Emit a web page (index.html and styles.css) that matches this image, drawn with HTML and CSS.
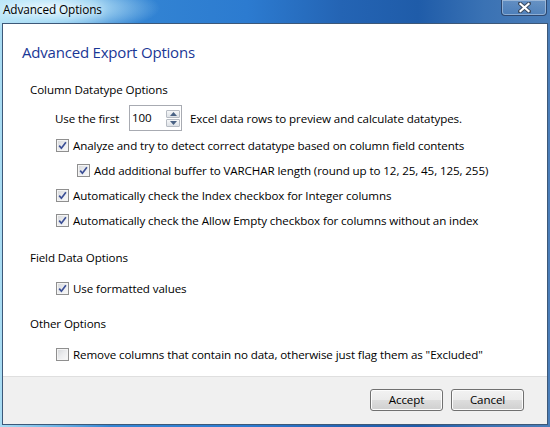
FILE: index.html
```html
<!DOCTYPE html>
<html>
<head>
<meta charset="utf-8">
<title>Advanced Options</title>
<link rel="stylesheet" href="styles.css">
</head>
<body>
<div class="window">
  <div class="titlebar">
    <span class="title">Advanced Options</span>
    <div class="close">
      <svg width="13" height="11" viewBox="0 0 13 11">
        <path d="M2 1.5 L11 9.5 M11 1.5 L2 9.5" stroke="#3a4a60" stroke-width="4" stroke-linecap="square"/>
        <path d="M2.5 2 L10.5 9 M10.5 2 L2.5 9" stroke="#ffffff" stroke-width="2.2" stroke-linecap="square"/>
      </svg>
    </div>
  </div>
  <div class="client">
    <div class="content">
      <h1 class="main">Advanced Export Options</h1>

      <div class="group">
        <div class="group-title">Column Datatype Options</div>
        <div class="spin-row">
          <span class="spin-label">Use the first</span>
          <div class="spin">
            <span class="spin-value">100</span>
            <div class="spin-btns">
              <span class="spin-btn"><svg width="7" height="4" viewBox="0 0 7 4"><path d="M0 4 L3.5 0 L7 4 Z" fill="#4a6284"/></svg></span>
              <span class="spin-btn"><svg width="7" height="4" viewBox="0 0 7 4"><path d="M0 0 L3.5 4 L7 0 Z" fill="#4a6284"/></svg></span>
            </div>
          </div>
          <span class="spin-after">Excel data rows to preview and calculate datatypes.</span>
        </div>
        <div class="checks">
          <div class="check-row"><span class="cb checked"><svg width="9" height="9" viewBox="0 0 9 9"><path d="M1.2 4.6 L3.4 7.2 L7.9 1.3" fill="none" stroke="#3b4f96" stroke-width="1.7"/></svg></span><span>Analyze and try to detect correct datatype based on column field contents</span></div>
          <div class="check-row nested"><span class="cb checked"><svg width="9" height="9" viewBox="0 0 9 9"><path d="M1.2 4.6 L3.4 7.2 L7.9 1.3" fill="none" stroke="#3b4f96" stroke-width="1.7"/></svg></span><span>Add additional buffer to VARCHAR length (round up to 12, 25, 45, 125, 255)</span></div>
          <div class="check-row"><span class="cb checked"><svg width="9" height="9" viewBox="0 0 9 9"><path d="M1.2 4.6 L3.4 7.2 L7.9 1.3" fill="none" stroke="#3b4f96" stroke-width="1.7"/></svg></span><span>Automatically check the Index checkbox for Integer columns</span></div>
          <div class="check-row"><span class="cb checked"><svg width="9" height="9" viewBox="0 0 9 9"><path d="M1.2 4.6 L3.4 7.2 L7.9 1.3" fill="none" stroke="#3b4f96" stroke-width="1.7"/></svg></span><span>Automatically check the Allow Empty checkbox for columns without an index</span></div>
        </div>
      </div>

      <div class="group">
        <div class="group-title sec">Field Data Options</div>
        <div class="check-row single"><span class="cb checked"><svg width="9" height="9" viewBox="0 0 9 9"><path d="M1.2 4.6 L3.4 7.2 L7.9 1.3" fill="none" stroke="#3b4f96" stroke-width="1.7"/></svg></span><span>Use formatted values</span></div>
      </div>

      <div class="group">
        <div class="group-title sec2">Other Options</div>
        <div class="check-row single"><span class="cb"></span><span>Remove columns that contain no data, otherwise just flag them as "Excluded"</span></div>
      </div>
    </div>
    <div class="footer">
      <button class="btn">Accept</button>
      <button class="btn">Cancel</button>
    </div>
  </div>
</div>
</body>
</html>
```
FILE: styles.css
```css
* { box-sizing: border-box; }
html, body { margin: 0; padding: 0; }
body {
  width: 550px;
  height: 427px;
  overflow: hidden;
  font-family: "Segoe UI", "Open Sans", "Noto Sans", sans-serif;
  font-size: 11.6px;
  letter-spacing: -0.1px;
  color: #000;
}
.window {
  width: 550px;
  height: 427px;
  display: flex;
  flex-direction: column;
  background:
    radial-gradient(ellipse 110px 26px at 50px 8px, rgba(235,250,255,0.95) 0%, rgba(200,238,252,0.75) 45%, rgba(160,215,245,0) 100%),
    linear-gradient(90deg, #a9dcf3 0%, #6fb6e6 10%, #3486d4 20%, #2c7bd0 45%, #2464b4 62%, #1f5ca9 76%, #3a72b4 88%, #4a7db8 100%);
}
.titlebar {
  height: 23px;
  display: flex;
  align-items: flex-start;
  padding-left: 3px;
}
.title {
  line-height: 19px;
  font-size: 11.8px;
  color: #000;
  text-shadow: 0 0 6px rgba(255,255,255,0.9);
}
.close {
  margin-left: auto;
  margin-right: 3px;
  width: 46px;
  height: 16px;
  border: 1px solid rgba(28,48,84,0.75);
  border-top: none;
  border-radius: 0 0 4px 4px;
  background: linear-gradient(180deg, rgba(255,255,255,0.18), rgba(255,255,255,0.06));
  box-shadow: inset 0 0 0 1px rgba(255,255,255,0.35);
  display: flex;
  justify-content: center;
  padding-top: 2px;
}
.close svg { display: block; }
.client {
  flex: 1;
  margin: 0 2px 2px 2px;
  border: 1px solid #3d5878;
  display: flex;
  flex-direction: column;
  background: #fff;
}
.content {
  flex: 1;
  padding: 18px 0 0 19px;
  background: #fff;
}
.main {
  margin: 0;
  font-size: 15px;
  letter-spacing: -0.2px;
  font-weight: normal;
  line-height: 20px;
  color: #1a3796;
}
.group { margin-left: 8px; }
.group-title {
  line-height: 16px;
  margin-top: 20px;
}
.group-title.sec { margin-top: 22px; }
.group-title.sec2 { margin-top: 20px; }
.spin-row {
  display: flex;
  align-items: center;
  height: 26px;
  margin-top: 7px;
  padding-left: 25px;
}
.spin-label { width: 74px; }
.spin {
  width: 53px;
  height: 26px;
  border: 1px solid #a8abb2;
  display: flex;
  align-items: center;
  padding-left: 2px;
}
.spin-value { line-height: 16px; }
.spin-btns {
  margin-left: auto;
  margin-right: 1px;
  display: flex;
  flex-direction: column;
  gap: 1px;
}
.spin-btn {
  width: 14px;
  height: 8px;
  border: 1px solid #b7bcc4;
  border-radius: 1px;
  background: linear-gradient(180deg, #f6f7f8, #dde1e6);
  display: flex;
  align-items: center;
  justify-content: center;
}
.spin-btn svg { display: block; }
.spin-after { margin-left: 8px; }
.checks {
  display: flex;
  flex-direction: column;
  gap: 9px;
  margin-top: 6px;
}
.check-row {
  display: flex;
  align-items: center;
  height: 16px;
  padding-left: 26px;
  gap: 4px;
}
.check-row.nested { padding-left: 47px; }
.check-row.single { margin-top: 14px; }
.cb {
  width: 13px;
  height: 13px;
  flex: none;
  border: 1px solid #8f8f8f;
  background: linear-gradient(135deg, #d4d6d9 0%, #ebecee 50%, #f9f9f9 100%);
  box-shadow: inset 0 0 0 1px #f4f4f4;
  display: flex;
  align-items: center;
  justify-content: center;
}
.cb svg { display: block; }
.footer {
  height: 48px;
  border-top: 1px solid #dfdfdf;
  background: #f0f0f0;
  display: flex;
  justify-content: flex-end;
  align-items: flex-start;
  gap: 8px;
  padding: 12px 23px 0 0;
}
.btn {
  width: 73px;
  height: 22px;
  font-family: inherit;
  font-size: 11.6px;
  letter-spacing: -0.1px;
  color: #000;
  border: 1px solid #707070;
  border-radius: 3px;
  background: linear-gradient(180deg, #f2f2f2 0%, #ebebeb 48%, #dddddd 52%, #cfcfcf 100%);
  box-shadow: inset 0 0 0 1px #fcfcfc;
  padding: 0;
  line-height: 18px;
}
```
